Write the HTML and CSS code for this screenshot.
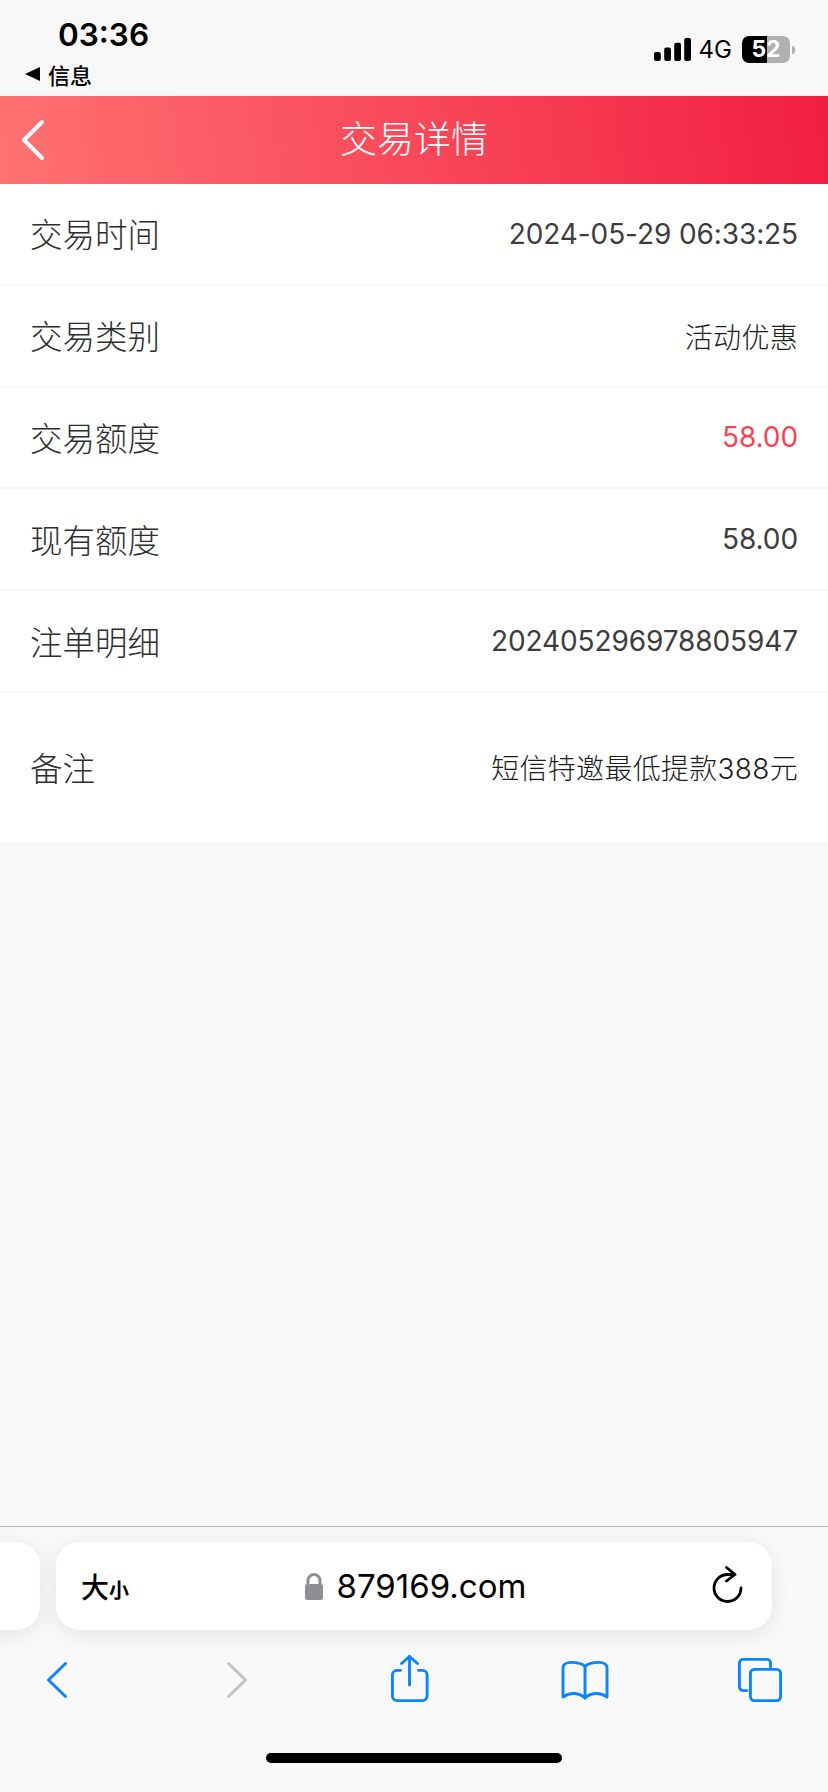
FILE: index.html
```html
<!DOCTYPE html>
<html lang="zh-CN">
<head>
<meta charset="utf-8">
<title>交易详情</title>
<link rel="stylesheet" href="styles.css">
</head>
<body>
<div class="status">
  <div class="status-left">
    <div class="clock">03:36</div>
    <div class="return"><span class="return-arrow"></span><span>信息</span></div>
  </div>
  <div class="status-right">
    <svg class="signal" width="37" height="23" viewBox="0 0 37 23">
      <rect x="0" y="14" width="6.8" height="9" rx="2"/>
      <rect x="10.2" y="9.5" width="6.8" height="13.5" rx="2"/>
      <rect x="20.2" y="4.7" width="6.8" height="18.3" rx="2"/>
      <rect x="30.2" y="0" width="6.8" height="23" rx="2"/>
    </svg>
    <span class="network">4G</span>
    <span class="battery">52</span>
    <span class="battery-nub"></span>
  </div>
</div>

<header class="topbar">
  <svg class="topbar-back" width="26" height="44" viewBox="0 0 26 44">
    <path d="M22 4 L4 22 L22 40"/>
  </svg>
  <h1 class="topbar-title">交易详情</h1>
</header>

<main class="content">
  <section class="details">
    <div class="row"><span class="row-label">交易时间</span><span class="row-value row-value-num">2024-05-29 06:33:25</span></div>
    <div class="row"><span class="row-label">交易类别</span><span class="row-value row-value-text">活动优惠</span></div>
    <div class="row"><span class="row-label">交易额度</span><span class="row-value row-value-num row-value-red">58.00</span></div>
    <div class="row"><span class="row-label">现有额度</span><span class="row-value row-value-num">58.00</span></div>
    <div class="row"><span class="row-label">注单明细</span><span class="row-value row-value-num">202405296978805947</span></div>
    <div class="row row-note"><span class="row-label">备注</span><span class="row-value row-value-text">短信特邀最低提款388元</span></div>
  </section>
</main>

<footer class="browser">
  <div class="tabs-strip">
    <div class="pill-prev"></div>
    <div class="pill">
      <span class="text-size"><span class="text-size-big">大</span><span class="text-size-small">小</span></span>
      <span class="address">
        <svg class="lock" width="18" height="27" viewBox="0 0 18 27">
          <path class="lock-shackle" d="M3 13 V7.500 a6 6 0 0 1 12 0 V13"/>
          <rect x="0" y="11" width="18" height="16" rx="2.5"/>
        </svg>
        <span class="url">879169.com</span>
      </span>
      <svg class="reload" width="32" height="38" viewBox="0 0 32 38">
        <path d="M29 22 A13.500 13.500 0 1 1 15.500 8.500 H21"/>
        <path d="M14.500 1.500 L23 8.500 L14.500 15"/>
      </svg>
    </div>
  </div>
  <nav class="nav">
    <svg class="nav-icon blue" width="60" height="50" viewBox="0 0 60 50"><path d="M38.500 9.500 L21.500 26 L38.500 42.500"/></svg>
    <svg class="nav-icon grey" width="60" height="50" viewBox="0 0 60 50"><path d="M21.500 9.500 L38.500 26 L21.500 42.500"/></svg>
    <svg class="nav-icon blue" width="60" height="50" viewBox="0 0 60 50">
      <path d="M20.500 16.400 H17 a4.600 4.600 0 0 0 -4.600 4.600 V42 a4.600 4.600 0 0 0 4.600 4.600 H42.500 a4.600 4.600 0 0 0 4.600 -4.600 V21 a4.600 4.600 0 0 0 -4.600 -4.600 H38.500"/>
      <path d="M29.500 31 V2.500"/>
      <path d="M21.500 9.500 L29.500 2.500 L37.500 9.500"/>
    </svg>
    <svg class="nav-icon blue" width="60" height="50" viewBox="0 0 60 50">
      <path d="M30 12.500 C27 9 21 8.400 16 8.400 C12 8.400 8 10 8 14 V43 C11 41 14 39.500 18 39.500 C23 39.500 27 41 30 44 C33 41 37 39.500 42 39.500 C46 39.500 49 41 52 43 V14 C52 10 48 8.400 44 8.400 C39 8.400 33 9 30 12.500 Z"/>
      <path d="M30 12.500 V44"/>
    </svg>
    <svg class="nav-icon blue" width="60" height="50" viewBox="0 0 60 50">
      <path d="M17 36.600 H13 a3.600 3.600 0 0 1 -3.600 -3.600 V9 a3.600 3.600 0 0 1 3.600 -3.600 H37 a3.600 3.600 0 0 1 3.600 3.600 V13"/>
      <rect x="20.400" y="15.400" width="30.200" height="31.200" rx="4"/>
    </svg>
  </nav>
  <div class="home-row"><div class="home-bar"></div></div>
</footer>
</body>
</html>
```
FILE: styles.css
```css
* {
  box-sizing: border-box;
}

html,
body {
  margin: 0;
  padding: 0;
}

body {
  width: 828px;
  height: 1792px;
  display: flex;
  flex-direction: column;
  overflow: hidden;
  background: #f8f8f8;
  font-family: Inter, "Noto Sans CJK SC", sans-serif;
  color: #333;
}

/* System status bar */
.status {
  height: 96px;
  flex: none;
  display: flex;
  justify-content: space-between;
  background: #f8f8f8;
  color: #000;
}

.status-left {
  padding: 15px 0 0 25px;
}

.clock {
  margin-left: 33px;
  font-size: 31.500px;
  line-height: 40px;
  font-weight: 600;
}

.return {
  display: flex;
  align-items: center;
  gap: 8px;
  height: 28px;
  margin-top: 5px;
  font-size: 22px;
  font-weight: 500;
}

.return-arrow {
  width: 0;
  height: 0;
  border-style: solid;
  border-width: 7px 15px 7px 0;
  border-color: transparent #000 transparent transparent;
}

.status-right {
  display: flex;
  align-items: center;
  align-self: flex-start;
  height: 27px;
  margin: 36px 33px 0 0;
}

.signal {
  fill: #000;
  margin-right: 8px;
}

.network {
  font-size: 24px;
  font-weight: 400;
  margin-right: 10px;
}

.battery {
  width: 48px;
  height: 27px;
  border-radius: 7px;
  background: linear-gradient(to right, #000 52%, #b0b0b0 52%);
  color: #fff;
  font-size: 23px;
  line-height: 27px;
  font-weight: 700;
  text-align: center;
}

.battery-nub {
  width: 3px;
  height: 8px;
  margin-left: 2px;
  border-radius: 0 3px 3px 0;
  background: #b0b0b0;
}

/* Red page header */
.topbar {
  height: 88px;
  flex: none;
  position: relative;
  display: flex;
  align-items: center;
  justify-content: center;
  background: linear-gradient(82deg, #ff7272 0%, #f21e41 100%);
}

.topbar-back {
  position: absolute;
  left: 20px;
  top: 22px;
  fill: none;
  stroke: #fff;
  stroke-width: 4;
  stroke-linecap: round;
  stroke-linejoin: round;
}

.topbar-title {
  margin: 0;
  font-size: 37px;
  line-height: 50px;
  font-weight: 300;
  color: #fff;
}

/* Detail rows */
.content {
  flex: 1;
  min-height: 0;
}

.details {
  background: #fff;
}

.row {
  height: 101.800px;
  padding: 0 30px 0 30px;
  display: flex;
  align-items: center;
  justify-content: space-between;
  border-bottom: 2px solid #f8f8f8;
}

.row-note {
  height: 149px;
  border-bottom: 0;
}

.row-label {
  padding-bottom: 2px;
  font-size: 32.500px;
  font-weight: 300;
  color: #2e2e2e;
}

.row-value {
  font-size: 28px;
  color: #3d3d3d;
}

.row-value-num {
  letter-spacing: -0.1px;
}

.row-value-text {
  font-weight: 300;
  color: #1c1c1c;
  letter-spacing: 0.3px;
}

.row-value-red {
  color: #f74452;
}

/* Browser toolbar */
.browser {
  height: 266px;
  flex: none;
  border-top: 1px solid #b9b9b9;
  background: #f9f9f9;
}

.tabs-strip {
  display: flex;
  gap: 16px;
  height: 88px;
  margin: 15px 0 0 -60px;
}

.pill-prev {
  width: 100px;
  border-radius: 24px;
  background: #fff;
  box-shadow: 0 4px 22px rgba(0, 0, 0, 0.09);
}

.pill {
  width: 716px;
  padding: 0 28px 0 25px;
  display: flex;
  align-items: center;
  justify-content: space-between;
  border-radius: 24px;
  background: #fff;
  box-shadow: 0 4px 22px rgba(0, 0, 0, 0.09);
  color: #000;
}

.text-size {
  display: flex;
  align-items: baseline;
  font-weight: 500;
}

.text-size-big {
  font-size: 28px;
}

.text-size-small {
  font-size: 20px;
  font-weight: 700;
}

.address {
  display: flex;
  align-items: center;
  gap: 14px;
  margin-right: 10px;
}

.lock {
  fill: #8e8e93;
}

.lock-shackle {
  fill: none;
  stroke: #8e8e93;
  stroke-width: 3;
}

.url {
  font-size: 33px;
  line-height: 44px;
}

.reload {
  margin-top: -2px;
  fill: none;
  stroke: #000;
  stroke-width: 2.800;
  stroke-linecap: round;
  stroke-linejoin: round;
}

.nav {
  display: grid;
  grid-template-columns: 180px 173px 174.500px 175.500px 60px;
  height: 80px;
  padding: 24px 0 0 27px;
}

.nav-icon {
  fill: none;
  stroke-width: 2.900;
  stroke-linecap: round;
  stroke-linejoin: round;
}

.blue {
  stroke: #0a84ff;
}

.grey {
  stroke: #c2c2c2;
}

.home-row {
  display: flex;
  justify-content: center;
  padding-top: 43px;
}

.home-bar {
  width: 296px;
  height: 10px;
  border-radius: 5px;
  background: #000;
}
```
